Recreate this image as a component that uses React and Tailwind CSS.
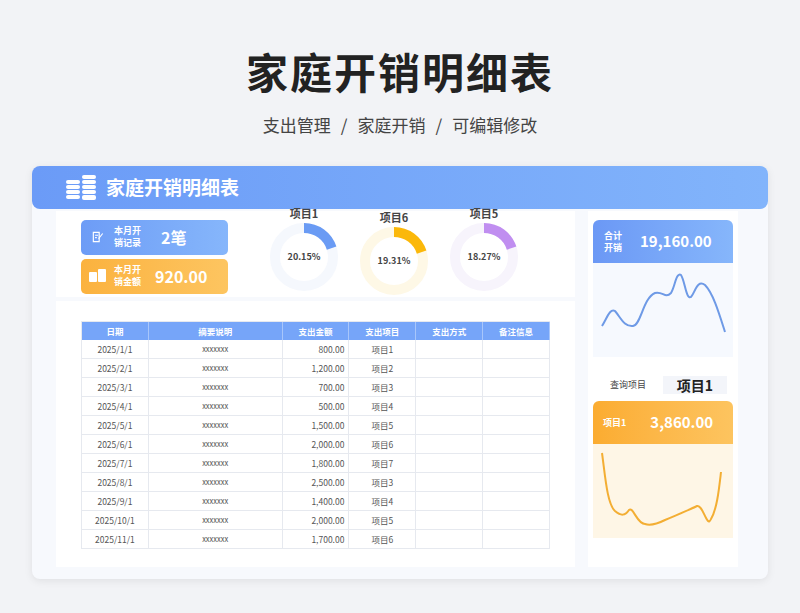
import React from "react";

const rows = [
  ["2025/1/1","800.00","项目1"],["2025/2/1","1,200.00","项目2"],["2025/3/1","700.00","项目3"],
  ["2025/4/1","500.00","项目4"],["2025/5/1","1,500.00","项目5"],["2025/6/1","2,000.00","项目6"],
  ["2025/7/1","1,800.00","项目7"],["2025/8/1","2,500.00","项目3"],["2025/9/1","1,400.00","项目4"],
  ["2025/10/1","2,000.00","项目5"],["2025/11/1","1,700.00","项目6"],
];

function Donut({ label, pct, color, track }) {
  const r = 29, c = 2 * Math.PI * r, f = 0.2;
  return (
    <div className="flex flex-col items-center w-[80px]">
      <div className="text-[11px] font-bold text-[#444] leading-[14px]">{label}</div>
      <div className="relative w-[70px] h-[70px] mt-[2px]">
        <svg width="70" height="70" viewBox="0 0 70 70">
          <circle cx="35" cy="35" r={r} fill="none" stroke={track} strokeWidth="10" />
          <circle cx="35" cy="35" r={r} fill="none" stroke={color} strokeWidth="10"
            strokeDasharray={`${c * f} ${c}`} transform="rotate(-90 35 35)" />
        </svg>
        <div className="absolute inset-0 flex items-center justify-center text-[9px] font-bold text-[#444]">{pct}</div>
      </div>
    </div>
  );
}

export default function App() {
  const font = { fontFamily: '"Noto Sans CJK SC","Noto Sans",sans-serif' };
  return (
    <div className="w-[800px] h-[613px] bg-[#f2f3f6] flex flex-col items-center" style={font}>
      <div className="mt-[41px] text-[42px] font-bold text-[#222] leading-[60px] tracking-[2px]">家庭开销明细表</div>
      <div className="mt-[12px] text-[17px] text-[#444] leading-[24px] flex gap-[10px]"><span>支出管理</span><span>/</span><span>家庭开销</span><span>/</span><span>可编辑修改</span></div>
      <div className="mt-[29px] w-[736px] h-[413px] bg-[#f7f9fd] rounded-[8px] shadow-[0_2px_8px_rgba(0,0,0,0.08)] flex flex-col">
        <div className="h-[43px] rounded-[8px] bg-gradient-to-r from-[#6b9bf7] to-[#82b4fb] flex items-center pl-[34px]">
          <svg width="34" height="28" viewBox="0 0 34 28" fill="white">
            <rect x="0" y="6" width="14" height="4" rx="2"/><rect x="0" y="11" width="14" height="4" rx="2"/>
            <rect x="0" y="16" width="14" height="4" rx="2"/><rect x="0" y="21" width="14" height="4" rx="2"/>
            <rect x="16" y="1" width="14" height="4" rx="2"/><rect x="16" y="6" width="14" height="4" rx="2"/>
            <rect x="16" y="11" width="14" height="4" rx="2"/><rect x="16" y="16" width="14" height="4" rx="2"/><rect x="16" y="21" width="14" height="5" rx="2"/>
          </svg>
          <span className="ml-[6px] text-white text-[19px] font-bold">家庭开销明细表</span>
        </div>
        <div className="flex flex-1 pl-[24px] pt-[2px] pb-[12px] gap-[13px]">
          <div className="w-[519px] flex flex-col gap-[4px]">
            <div className="h-[86px] bg-white flex items-center pl-[25px]">
              <div className="flex flex-col gap-[4px] mt-[5px]">
                <div className="w-[147px] h-[35px] rounded-[5px] bg-gradient-to-r from-[#6d9cf6] to-[#86b6fb] flex items-center text-white">
                  <svg className="ml-[10px]" width="14" height="14" viewBox="0 0 24 24" fill="none" stroke="white" strokeWidth="2"><path d="M4 4h10v16H4z"/><path d="M7 9h5M7 13h3"/><path d="M20 6l-7 9"/></svg>
                  <div className="ml-[9px] text-[9px] font-bold leading-[12px] whitespace-nowrap">本月开<br/>销记录</div>
                  <div className="ml-[20px] text-[16px] font-bold">2笔</div>
                </div>
                <div className="w-[147px] h-[35px] rounded-[5px] bg-gradient-to-r from-[#fbb23e] to-[#fdc560] flex items-center text-white">
                  <svg className="ml-[8px]" width="18" height="14" viewBox="0 0 18 14" fill="white"><rect x="0" y="3" width="8" height="10" rx="1"/><rect x="9" y="0" width="8" height="13" rx="1"/></svg>
                  <div className="ml-[7px] text-[9px] font-bold leading-[12px] whitespace-nowrap">本月开<br/>销金额</div>
                  <div className="ml-[14px] text-[16px] font-bold">920.00</div>
                </div>
              </div>
              <div className="flex ml-[36px] gap-[10px] mt-[-6px]">
                <Donut label="项目1" pct="20.15%" color="#6a9bf4" track="#f5f8fd" />
                <div className="mt-[4px]"><Donut label="项目6" pct="19.31%" color="#fbb80a" track="#fef8e6" /></div>
                <Donut label="项目5" pct="18.27%" color="#c08ef0" track="#f7f4fc" />
              </div>
            </div>
            <div className="flex-1 bg-white pl-[25px] pt-[20px]">
              <div className="w-[469px] border-l border-t border-[#e6e9ef] text-[8.5px] text-[#555]">
                <div className="flex h-[18px] bg-[#76a5f9] text-white font-bold">
                  {["日期","摘要说明","支出金额","支出项目","支出方式","备注信息"].map((h,i)=>(
                    <div key={h} className={`${i===1?"w-[134px]":"w-[67px]"} flex items-center justify-center border-r border-[#a8c6fb]`}>{h}</div>
                  ))}
                </div>
                {rows.map((r)=>(
                  <div key={r[0]} className="flex h-[19px] border-b border-[#e6e9ef]">
                    <div className="w-[67px] flex items-center justify-center border-r border-[#e6e9ef]">{r[0]}</div>
                    <div className="w-[134px] flex items-center justify-center border-r border-[#e6e9ef] text-[7.5px]">xxxxxxx</div>
                    <div className="w-[67px] flex items-center justify-end pr-[4px] border-r border-[#e6e9ef]">{r[1]}</div>
                    <div className="w-[67px] flex items-center justify-center border-r border-[#e6e9ef]">{r[2]}</div>
                    <div className="w-[67px] border-r border-[#e6e9ef]"></div>
                    <div className="w-[67px] border-r border-[#e6e9ef]"></div>
                  </div>
                ))}
              </div>
            </div>
          </div>
          <div className="w-[150px] bg-white pt-[9px] flex flex-col items-center">
            <div className="w-[140px] h-[43px] rounded-t-[6px] bg-gradient-to-r from-[#6b98f5] to-[#86b6fb] flex items-center text-white pl-[11px]">
              <div className="text-[9px] font-bold leading-[12px] whitespace-nowrap">合计<br/>开销</div>
              <div className="ml-[18px] text-[15px] font-bold">19,160.00</div>
            </div>
            <div className="w-[140px] h-[94px] bg-[#f6f9fe]">
              <svg width="140" height="94" viewBox="0 0 140 94">
                <path d="M9 63 C14 55,17 45,22 48 C28 55,31 64,40 63 C48 62,50 35,62 30 C70 28,72 36,78 30 C82 24,83 9,88 12 C92 18,93 37,98 34 C102 30,104 16,112 22 C120 30,126 50,132 69" fill="none" stroke="#6e9ae6" strokeWidth="2"/>
              </svg>
            </div>
            <div className="mt-[19px] w-[140px] flex items-center">
              <div className="w-[70px] text-center text-[9px] text-[#444]">查询项目</div>
              <div className="w-[64px] h-[18px] bg-[#f3f5fa] flex items-center justify-center text-[14px] font-bold text-[#222]">项目1</div>
            </div>
            <div className="mt-[7px] w-[140px] h-[43px] rounded-t-[6px] bg-gradient-to-r from-[#fbac30] to-[#fdc45f] flex items-center text-white pl-[10px]">
              <div className="text-[9px] font-bold">项目1</div>
              <div className="ml-[24px] text-[15px] font-bold">3,860.00</div>
            </div>
            <div className="w-[140px] h-[94px] bg-[#fef6e6]">
              <svg width="140" height="94" viewBox="0 0 140 94">
                <path d="M9 9 C12 30,14 60,22 67 C28 72,32 72,36 66 C40 62,44 80,52 80 C58 82,66 79,72 76 C86 70,96 66,104 62 C110 60,114 85,118 75 C124 65,126 45,128 28" fill="none" stroke="#f3ae33" strokeWidth="2"/>
              </svg>
            </div>
          </div>
        </div>
      </div>
    </div>
  );
}
